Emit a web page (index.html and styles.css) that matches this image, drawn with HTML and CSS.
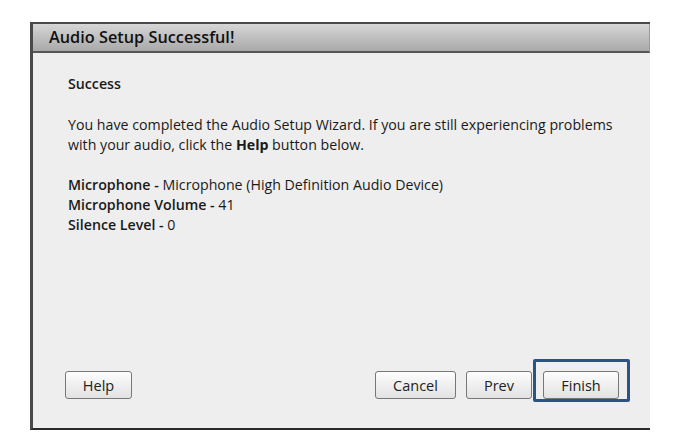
FILE: index.html
```html
<!DOCTYPE html>
<html lang="en">
<head>
    <meta charset="UTF-8">
    <meta name="viewport" content="width=device-width, initial-scale=1.0">
    <title>Audio Setup Successful!</title>
    <link rel="stylesheet" href="styles.css">
</head>
<body>
    <div class="dialog">
        <div class="title-bar">Audio Setup Successful!</div>
        <div class="dialog-body">
            <p class="heading">Success</p>
            <p class="message">You have completed the Audio Setup Wizard. If you are still experiencing problems<br>
                with your audio, click the <b>Help</b> button below.</p>
            <p class="details">
                <b>Microphone -</b> Microphone (High Definition Audio Device)<br>
                <b>Microphone Volume -</b> 41<br>
                <b>Silence Level -</b> 0
            </p>

            <div class="footer">
                <button class="btn help-btn">Help</button>
                <div class="spacer"></div>
                <button class="btn cancel-btn">Cancel</button>
                <button class="btn prev-btn">Prev</button>
                <div class="focus-ring">
                    <button class="btn finish-btn">Finish</button>
                </div>
            </div>
        </div>
    </div>
</body>
</html>
```

FILE: styles.css
```css
body {
    margin: 0;
    background: #fff;
    font-family: "Open Sans", "Noto Sans", sans-serif;
    color: #1a1a1a;
}
.dialog {
    margin: 22px 0 0 30px;
    width: 617px;
    height: 404px;
    display: flex;
    flex-direction: column;
    background: #eeeeee;
    border-top: 2px solid #4a4a4a;
    border-left: 3px solid #4a4a4a;
    border-bottom: 2px solid #2a2a2a;
}
.title-bar {
    height: 27px;
    line-height: 27px;
    padding-left: 16px;
    font-size: 16.3px;
    font-weight: 600;
    color: #111;
    background: linear-gradient(#d6d6d6, #a9a9a9);
    border-bottom: 2px solid #555;
    border-right: 1px solid #9a9a9a;
}
.dialog-body {
    flex: 1;
    display: flex;
    flex-direction: column;
    padding: 21px 20px 26px 35px;
    font-size: 14.2px;
    line-height: 20px;
}
.dialog-body p {
    margin: 0;
}
.heading {
    font-weight: 600;
}
.message {
    margin-top: 21px !important;
}
.details {
    margin-top: 20px !important;
}
.details b {
    font-weight: 600;
}
.footer {
    margin-top: auto;
    display: flex;
    align-items: flex-end;
}
.spacer {
    flex: 1;
}
.btn {
    height: 28px;
    padding: 0;
    font-family: inherit;
    font-size: 14.5px;
    color: #222;
    background: linear-gradient(#fdfdfd, #e2e2e2);
    border: 1px solid #777;
    border-radius: 3px;
    margin-bottom: 3px;
}
.help-btn {
    width: 67px;
    margin-left: -3px;
}
.cancel-btn {
    width: 81px;
}
.prev-btn {
    width: 66px;
    margin-left: 10px;
}
.focus-ring {
    margin-left: 1px;
    padding: 9px 8px 0 7px;
    border: 3px solid #2c5384;
    border-radius: 2px;
}
.focus-ring .btn {
    margin-bottom: 0;
}
.finish-btn {
    width: 76px;
}
```
